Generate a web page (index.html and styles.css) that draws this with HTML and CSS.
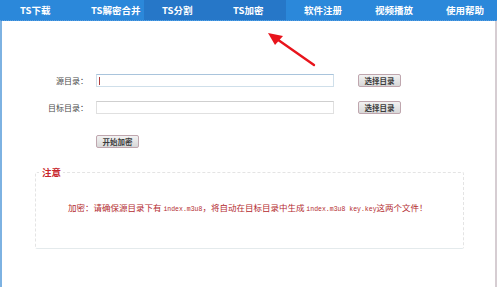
FILE: index.html
```html
<!DOCTYPE html>
<html lang="zh-CN">
<head>
<meta charset="utf-8">
<title>TS加密</title>
<link rel="stylesheet" href="styles.css">
</head>
<body>
<div class="page">
  <nav class="nav">
    <a class="tab">TS下载</a>
    <a class="tab">TS解密合并</a>
    <a class="tab dark">TS分割</a>
    <a class="tab dark">TS加密</a>
    <a class="tab">软件注册</a>
    <a class="tab">视频播放</a>
    <a class="tab">使用帮助</a>
  </nav>
  <div class="main">
    <div class="content">
      <div class="form">
        <div class="row">
          <label class="label">源目录：</label>
          <div class="input focus"><span class="caret"></span></div>
          <button class="btn small">选择目录</button>
        </div>
        <div class="row">
          <label class="label">目标目录：</label>
          <div class="input"></div>
          <button class="btn small">选择目录</button>
        </div>
        <div class="row start">
          <span class="label"></span>
          <button class="btn">开始加密</button>
        </div>
      </div>
      <fieldset class="notice">
        <legend class="legend">注意</legend>
        <p class="msg">加密：请确保源目录下有 <span class="mono">index.m3u8</span>，将自动在目标目录中生成 <span class="mono">index.m3u8 key.key</span>这两个文件！</p>
      </fieldset>
    </div>
    <div class="rail"></div>
  </div>
  <svg class="arrow" width="50" height="40" viewBox="0 0 50 40">
    <line x1="8" y1="6" x2="48" y2="34" stroke="#e8141c" stroke-width="2.4" stroke-linecap="round"/>
    <polygon points="2,2 17,5 9,14" fill="#e8141c"/>
  </svg>
</div>
</body>
</html>
```
FILE: styles.css
```css
html, body {
  margin: 0;
  padding: 0;
  background: #ffffff;
}
body {
  font-family: "Noto Sans CJK SC", "Noto Sans", sans-serif;
  width: 497px;
  height: 287px;
  overflow: hidden;
}
.page {
  position: relative;
  width: 497px;
  height: 287px;
  display: flex;
  flex-direction: column;
}
.nav {
  height: 21px;
  flex: none;
  display: flex;
  padding-left: 2px;
  background: #2b88da;
  border-bottom: 1px dotted #5b9fe0;
  box-sizing: border-box;
}
.tab {
  width: 71px;
  flex: none;
  box-sizing: border-box;
  padding-left: 18px;
  color: #ffffff;
  font-weight: bold;
  font-size: 9.5px;
  line-height: 20px;
  white-space: nowrap;
}
.tab.dark {
  background: #2677c8;
}
.main {
  flex: 1;
  display: flex;
  border-left: 2px solid #7db2e2;
}
.content {
  flex: 1;
  display: flex;
  flex-direction: column;
}
.rail {
  width: 2px;
  flex: none;
  background: #d6cdd2;
}
.form {
  margin-top: 53px;
  display: flex;
  flex-direction: column;
}
.row {
  display: flex;
  align-items: center;
  height: 13px;
  margin-bottom: 14px;
}
.row.start {
  margin-top: 7px;
  margin-bottom: 0;
}
.label {
  width: 86px;
  flex: none;
  text-align: right;
  font-size: 8px;
  color: #4a4a4a;
  margin-right: 8px;
}
.input {
  width: 238px;
  height: 13px;
  box-sizing: border-box;
  border: 1px solid #e0e0e0;
  border-top-color: #cfcfcf;
  background: #ffffff;
  display: flex;
  align-items: center;
}
.input.focus {
  border-color: #cfdfea;
  border-top-color: #a9c4dc;
}
.caret {
  width: 1px;
  height: 8px;
  margin-left: 2px;
  background: #b04040;
}
.btn {
  width: 43px;
  height: 13px;
  box-sizing: border-box;
  padding: 0;
  margin-left: 24px;
  border: 1px solid #bfa6ae;
  border-radius: 2px;
  background: linear-gradient(#f2f2f2, #d8d8d8);
  font-family: "Noto Sans CJK SC", sans-serif;
  font-size: 7.5px;
  font-weight: bold;
  color: #3c3c3c;
  line-height: 11px;
}
.row.start .btn {
  margin-left: 0;
}
.notice {
  margin: 18px 31px 0 33px;
  padding: 0 0 0 32px;
  height: 83px;
  box-sizing: border-box;
  border: 1px dashed #e4e4e4;
  border-bottom: 1px solid #e4eaec;
  border-radius: 2px;
}
.legend {
  padding: 0 2px 0 3px;
  margin-left: -29px;
  font-size: 9.5px;
  font-weight: bold;
  color: #c8262c;
  line-height: 12px;
}
.msg {
  margin: 23px 0 0 0;
  font-size: 8.5px;
  line-height: 12px;
  color: #b42c30;
  white-space: nowrap;
}
.mono {
  font-family: "Liberation Mono", monospace;
  font-size: 6.5px;
}
.arrow {
  position: absolute;
  left: 266px;
  top: 31px;
}
```
